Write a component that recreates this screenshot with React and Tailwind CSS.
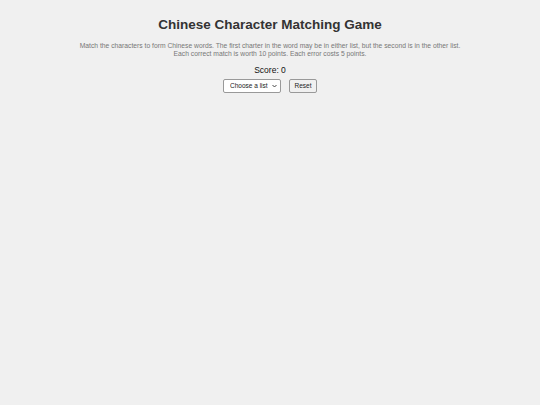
export default function App() {
  return (
    <div className="min-h-[405px] bg-[#f0f0f0] font-['Liberation_Sans',Arial,sans-serif] text-[#333] antialiased">
      <div className="flex flex-col items-center pt-[16px]">
        <h1 className="text-[13.5px] font-bold leading-[18px]">Chinese Character Matching Game</h1>
        <p className="mt-[8px] text-center text-[6.75px] leading-[8px] text-[#777]">
          Match the characters to form Chinese words. The first charter in the word may be in either list, but the second is in the other list.
          <br />
          Each correct match is worth 10 points. Each error costs 5 points.
        </p>
        <div className="mt-[7px] text-[8.5px] font-normal leading-[10px] text-[#111]">Score: 0</div>
        <div className="mt-[4px] flex items-center gap-[8px]">
          <div className="relative">
            <select className="block h-[14px] w-[58px] appearance-none rounded-[2px] border border-[#999] bg-white pl-[6px] text-[6.5px] leading-[12px] text-[#222]">
              <option>Choose a list</option>
            </select>
            <svg className="pointer-events-none absolute right-[4px] top-[5px]" width="5" height="4" viewBox="0 0 5 4">
              <path d="M0.5 1 L2.5 3 L4.5 1" fill="none" stroke="#333" strokeWidth="0.9" />
            </svg>
          </div>
          <button className="h-[14px] rounded-[2px] border border-[#999] bg-[#f0f0f0] px-[4.5px] text-[6.5px] leading-[12px] text-[#222]">
            Reset
          </button>
        </div>
      </div>
    </div>
  );
}
